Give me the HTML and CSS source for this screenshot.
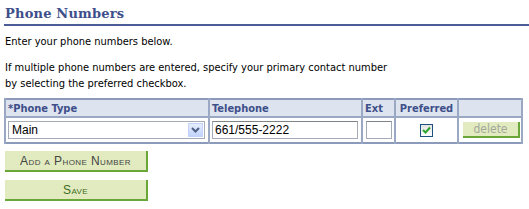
FILE: index.html
```html
<!DOCTYPE html>
<html lang="en">
<head>
    <meta charset="UTF-8">
    <title>Phone Numbers</title>
    <link rel="stylesheet" href="styles.css">
</head>
<body>
    <div class="page">
        <h1 class="title">Phone Numbers</h1>
        <p class="intro first">Enter your phone numbers below.</p>
        <p class="intro">If multiple phone numbers are entered, specify your primary contact number<br>by selecting the preferred checkbox.</p>

        <table class="grid">
            <colgroup>
                <col class="col-type">
                <col class="col-tel">
                <col class="col-ext">
                <col class="col-pref">
                <col class="col-del">
            </colgroup>
            <tr>
                <th>*Phone Type</th>
                <th>Telephone</th>
                <th>Ext</th>
                <th class="center">Preferred</th>
                <th></th>
            </tr>
            <tr>
                <td>
                    <div class="select">
                        <span class="select-text">Main</span>
                        <span class="select-arrow">
                            <svg width="9" height="6" viewBox="0 0 9 6"><path d="M1 1 L4.5 4.5 L8 1" fill="none" stroke="#4d6185" stroke-width="2"/></svg>
                        </span>
                    </div>
                </td>
                <td><div class="field tel">661/555-2222</div></td>
                <td><div class="field ext"></div></td>
                <td class="center">
                    <span class="check">
                        <svg width="9" height="8" viewBox="0 0 9 8"><path d="M1 4 L3.5 6.5 L8 1.5" fill="none" stroke="#2fa52f" stroke-width="2"/></svg>
                    </span>
                </td>
                <td class="center"><span class="btn-delete">delete</span></td>
            </tr>
        </table>

        <div class="actions">
            <button class="btn add">Add a Phone Number</button>
            <button class="btn save">Save</button>
        </div>
    </div>
</body>
</html>
```

FILE: styles.css
```css
body {
    margin: 0;
    font-family: "DejaVu Sans Condensed", "DejaVu Sans", sans-serif;
    font-size: 11px;
    color: #000;
    background: #fff;
}
.page {
    padding: 5px 0 0 4px;
}
.title {
    margin: 0;
    padding: 0 0 1px 1px;
    font-family: "DejaVu Serif", serif;
    font-size: 13px;
    font-weight: bold;
    letter-spacing: 0.2px;
    color: #3d4f8a;
    line-height: 18px;
    border-bottom: 2px solid #4b5c96;
}
.intro {
    margin: 10px 0 0 1px;
    line-height: 16px;
}
.intro.first {
    margin-top: 8px;
}
.grid {
    margin-top: 6px;
    width: 517px;
    table-layout: fixed;
    border-collapse: collapse;
    border: 2px solid #8c9bbb;
}
.col-type { width: 204px; }
.col-tel { width: 153px; }
.col-ext { width: 33px; }
.col-pref { width: 63px; }
.col-del { width: 64px; }
.grid th {
    background: #dde3ef;
    color: #3d4f8a;
    font-weight: bold;
    text-align: left;
    height: 16px;
    padding: 0 2px;
    border: 2px solid #9aa8c4;
    border-top: none;
}
.grid td {
    height: 24px;
    padding: 0 2px;
    border-left: 2px solid #9aa8c4;
    border-right: 2px solid #9aa8c4;
}
.grid th.center,
.center { text-align: center; }
.select {
    display: flex;
    align-items: center;
    height: 16px;
    margin-right: 1px;
    border: 1px solid #a5acb5;
    font-family: "Liberation Sans", Arial, sans-serif;
    font-size: 12px;
}
.select-text {
    flex: 1;
    padding-left: 3px;
}
.select-arrow {
    display: flex;
    align-items: center;
    justify-content: center;
    width: 15px;
    height: 14px;
    margin-right: 1px;
    background: linear-gradient(#e6eefc, #c1d3fb);
    border: 1px solid #c3d3fd;
    box-sizing: border-box;
}
.field {
    height: 18px;
    border: 1px solid #a5acb5;
    border-top-color: #7f8488;
    font-family: "Liberation Sans", Arial, sans-serif;
    font-size: 12px;
    line-height: 16px;
    padding-left: 2px;
    box-sizing: border-box;
}
.tel { width: 146px; }
.ext { width: 26px; margin-left: 1px; }
.check {
    display: inline-flex;
    align-items: center;
    justify-content: center;
    width: 11px;
    height: 11px;
    border: 1px solid #1c5180;
    background: linear-gradient(#e3e3e0, #fff);
    vertical-align: middle;
}
.btn-delete {
    display: inline-block;
    width: 57px;
    height: 16px;
    line-height: 15px;
    margin-left: 2px;
    background: #e1ebbf;
    color: #a4a79b;
    font-size: 12px;
    border-right: 2px solid #6aa73a;
    border-bottom: 2px solid #6aa73a;
    box-sizing: border-box;
    vertical-align: middle;
}
.actions {
    display: flex;
    flex-direction: column;
    gap: 8px;
    margin-top: 7px;
    padding-left: 1px;
}
.btn {
    width: 143px;
    height: 21px;
    padding: 0;
    border: none;
    border-right: 2px solid #6aa73a;
    border-bottom: 2px solid #6aa73a;
    background: #e1ebbf;
    font-family: "Liberation Sans", Arial, sans-serif;
    font-size: 12px;
    font-variant: small-caps;
    letter-spacing: 0.4px;
}
.add { color: #444; }
.save { color: #3e6b22; }
```
